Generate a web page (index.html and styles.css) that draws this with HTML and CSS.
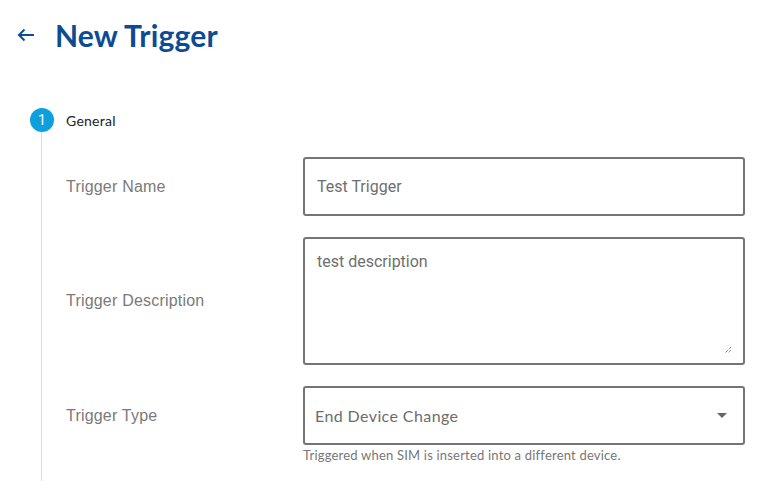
FILE: index.html
```html
<!DOCTYPE html>
<html>
<head>
<meta charset="utf-8">
<link rel="stylesheet" href="styles.css">
</head>
<body>
<header class="page-head">
  <svg class="back" width="18" height="14" viewBox="0 0 18 14"><path d="M17 7H2M7.5 1.5L2 7l5.5 5.5" fill="none" stroke="#0d4c92" stroke-width="2"/></svg>
  <h1 class="title">New Trigger</h1>
</header>
<section class="stepper">
  <div class="step-head">
    <span class="step-num">1</span>
    <span class="step-name">General</span>
  </div>
  <div class="step-body">
    <div class="form">
      <label class="label">Trigger Name</label>
      <div class="field input">Test Trigger</div>
      <label class="label">Trigger Description</label>
      <div class="field textarea">test description
        <svg class="grip" width="8" height="8" viewBox="0 0 8 8"><path d="M7 1L1 7M7 4L4 7" stroke="#555" stroke-width="1" stroke-dasharray="1 1"/></svg>
      </div>
      <label class="label">Trigger Type</label>
      <div class="select-wrap">
        <div class="field select">End Device Change<span class="caret"></span></div>
        <div class="helper">Triggered when SIM is inserted into a different device.</div>
      </div>
    </div>
  </div>
</section>
</body>
</html>
```
FILE: styles.css
```css
html, body { margin: 0; background: #fff; }
body { font-family: "Lato", "Liberation Sans", sans-serif; width: 770px; height: 481px; overflow: hidden; }
.page-head { display: flex; align-items: center; height: 69px; padding-left: 17px; }
.back { margin-right: 20px; }
.title { margin: 0; font-size: 30px; font-weight: 700; color: #0d4c92; letter-spacing: 0.2px; }
.stepper { padding-left: 30px; padding-top: 39px; }
.step-head { display: flex; align-items: center; height: 24px; }
.step-num { width: 24px; height: 24px; border-radius: 50%; background: #0ea0dc; color: #fff; font-family: "Roboto", sans-serif; font-size: 14px; display: flex; align-items: center; justify-content: center; }
.step-name { margin-left: 12px; font-size: 14px; color: #222; letter-spacing: 0.25px; }
.step-body { margin-left: 11px; border-left: 1px solid #ddd; padding-left: 24px; padding-top: 25px; height: 324px; }
.form { display: grid; grid-template-columns: 237px 442px; row-gap: 21px; align-items: start; }
.label { font-family: "Liberation Sans", Arial, sans-serif; font-size: 16px; color: #7a7a7a; align-self: center; letter-spacing: 0.2px; }
.label:nth-of-type(3) { align-self: start; margin-top: 21px; }
.field { box-sizing: border-box; border: 2px solid #757575; border-radius: 3px; color: #6e6e6e; font-size: 16px; }
.input { height: 59px; display: flex; align-items: center; padding-left: 12px; font-family: "Roboto", sans-serif; }
.textarea { height: 128px; padding: 13px 12px; font-family: "Roboto", sans-serif; position: relative; }
.grip { position: absolute; right: 11px; bottom: 9px; }
.select { height: 59px; display: flex; align-items: center; padding-left: 10px; padding-right: 16px; justify-content: space-between; color: #6d6d6d; letter-spacing: 0.4px; }
.caret { width: 0; height: 0; border-left: 5px solid transparent; border-right: 5px solid transparent; border-top: 5px solid #666; }
.helper { font-size: 13px; color: #777; margin-top: 2px; letter-spacing: 0.2px; }
```
